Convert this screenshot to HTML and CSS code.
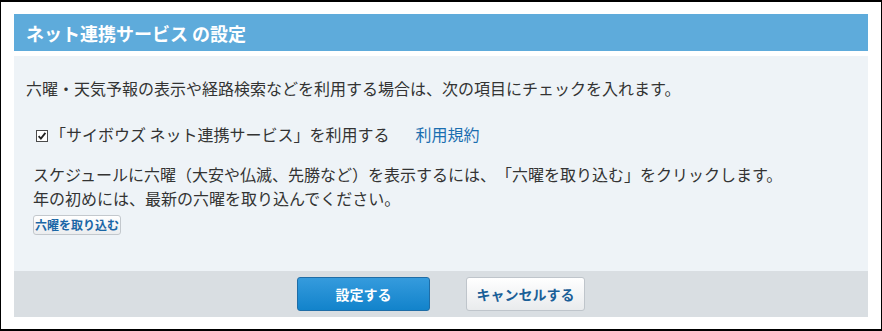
FILE: index.html
```html
<!DOCTYPE html>
<html lang="ja">
<head>
<meta charset="utf-8">
<link rel="stylesheet" href="styles.css">
</head>
<body>
<div class="frame">
  <div class="header"><h1 class="title">ネット連携サービス の設定</h1></div>
  <div class="content">
    <p class="lead">六曜・天気予報の表示や経路検索などを利用する場合は、次の項目にチェックを入れます。</p>
    <div class="check-row">
      <span class="checkbox"><svg width="12" height="12" viewBox="0 0 12 12"><rect x="0.5" y="0.5" width="11" height="11" fill="#fff" stroke="#4a4a4a"/><path d="M2.6 6.1 L4.9 8.6 L9.4 2.9" fill="none" stroke="#222" stroke-width="1.8"/></svg></span>
      <span class="check-label">「サイボウズ ネット連携サービス」を利用する</span>
      <a class="link" href="#">利用規約</a>
    </div>
    <div class="sub">
      <p class="desc">スケジュールに六曜（大安や仏滅、先勝など）を表示するには、「六曜を取り込む」をクリックします。<br>年の初めには、最新の六曜を取り込んでください。</p>
      <button class="small-btn" type="button">六曜を取り込む</button>
    </div>
  </div>
  <div class="footer">
    <button class="btn btn-primary" type="button">設定する</button>
    <button class="btn btn-secondary" type="button">キャンセルする</button>
  </div>
</div>
</body>
</html>
```

FILE: styles.css
```css
html, body {
  margin: 0;
  padding: 0;
  background: #fff;
}
body {
  font-family: "Noto Sans CJK JP", "Noto Sans", sans-serif;
  color: #333;
  text-spacing-trim: space-all;
}
.frame {
  box-sizing: border-box;
  width: 882px;
  height: 331px;
  border-style: solid;
  border-color: #000;
  border-width: 2px 1px 2px 1px;
  padding: 12px 13px 12px 13px;
  display: flex;
  flex-direction: column;
}
.header {
  height: 37px;
  background: #5eabdb;
  display: flex;
  align-items: center;
  padding-left: 12px;
  margin-bottom: 5px;
}
.title {
  margin: 0;
  font-size: 18px;
  font-weight: bold;
  color: #fff;
  line-height: 1;
}
.content {
  height: 215px;
  box-sizing: border-box;
  background: #eef3f7;
  padding: 20px 12px 0 12px;
}
.lead {
  margin: 0;
  font-size: 16px;
  line-height: 24px;
}
.check-row {
  margin-top: 22px;
  display: flex;
  align-items: center;
  height: 24px;
  padding-left: 10px;
  font-size: 16px;
}
.checkbox {
  display: flex;
  width: 12px;
  height: 12px;
  margin-right: 2px;
  margin-top: 3px;
}
.check-label {
  line-height: 24px;
}
.link {
  margin-left: 26px;
  color: #1a6eb0;
  text-decoration: none;
  line-height: 24px;
}
.sub {
  padding-left: 7px;
  margin-top: 16px;
}
.desc {
  margin: 0;
  font-size: 16px;
  line-height: 24px;
}
.small-btn {
  margin-top: 5px;
  height: 20px;
  width: 88px;
  padding: 0;
  font-family: inherit;
  font-size: 12px;
  font-weight: bold;
  color: #1a66a6;
  background: linear-gradient(#ffffff, #ebedef);
  border: 1px solid #c3c8cd;
  border-radius: 3px;
  line-height: 18px;
}
.footer {
  height: 46px;
  box-sizing: border-box;
  background: #d9dee2;
  display: flex;
  justify-content: center;
  align-items: flex-start;
  padding-top: 6px;
  gap: 36px;
}
.btn {
  height: 34px;
  padding: 0;
  font-family: inherit;
  font-size: 14px;
  font-weight: bold;
  border-radius: 3px;
}
.btn-primary {
  width: 133px;
  color: #fff;
  background: linear-gradient(#359bdd, #1283cb);
  border: 1px solid #1f6da6;
}
.btn-secondary {
  width: 119px;
  color: #1a5f98;
  background: linear-gradient(#ffffff, #e9ebed);
  border: 1px solid #bfc5cb;
}
```
